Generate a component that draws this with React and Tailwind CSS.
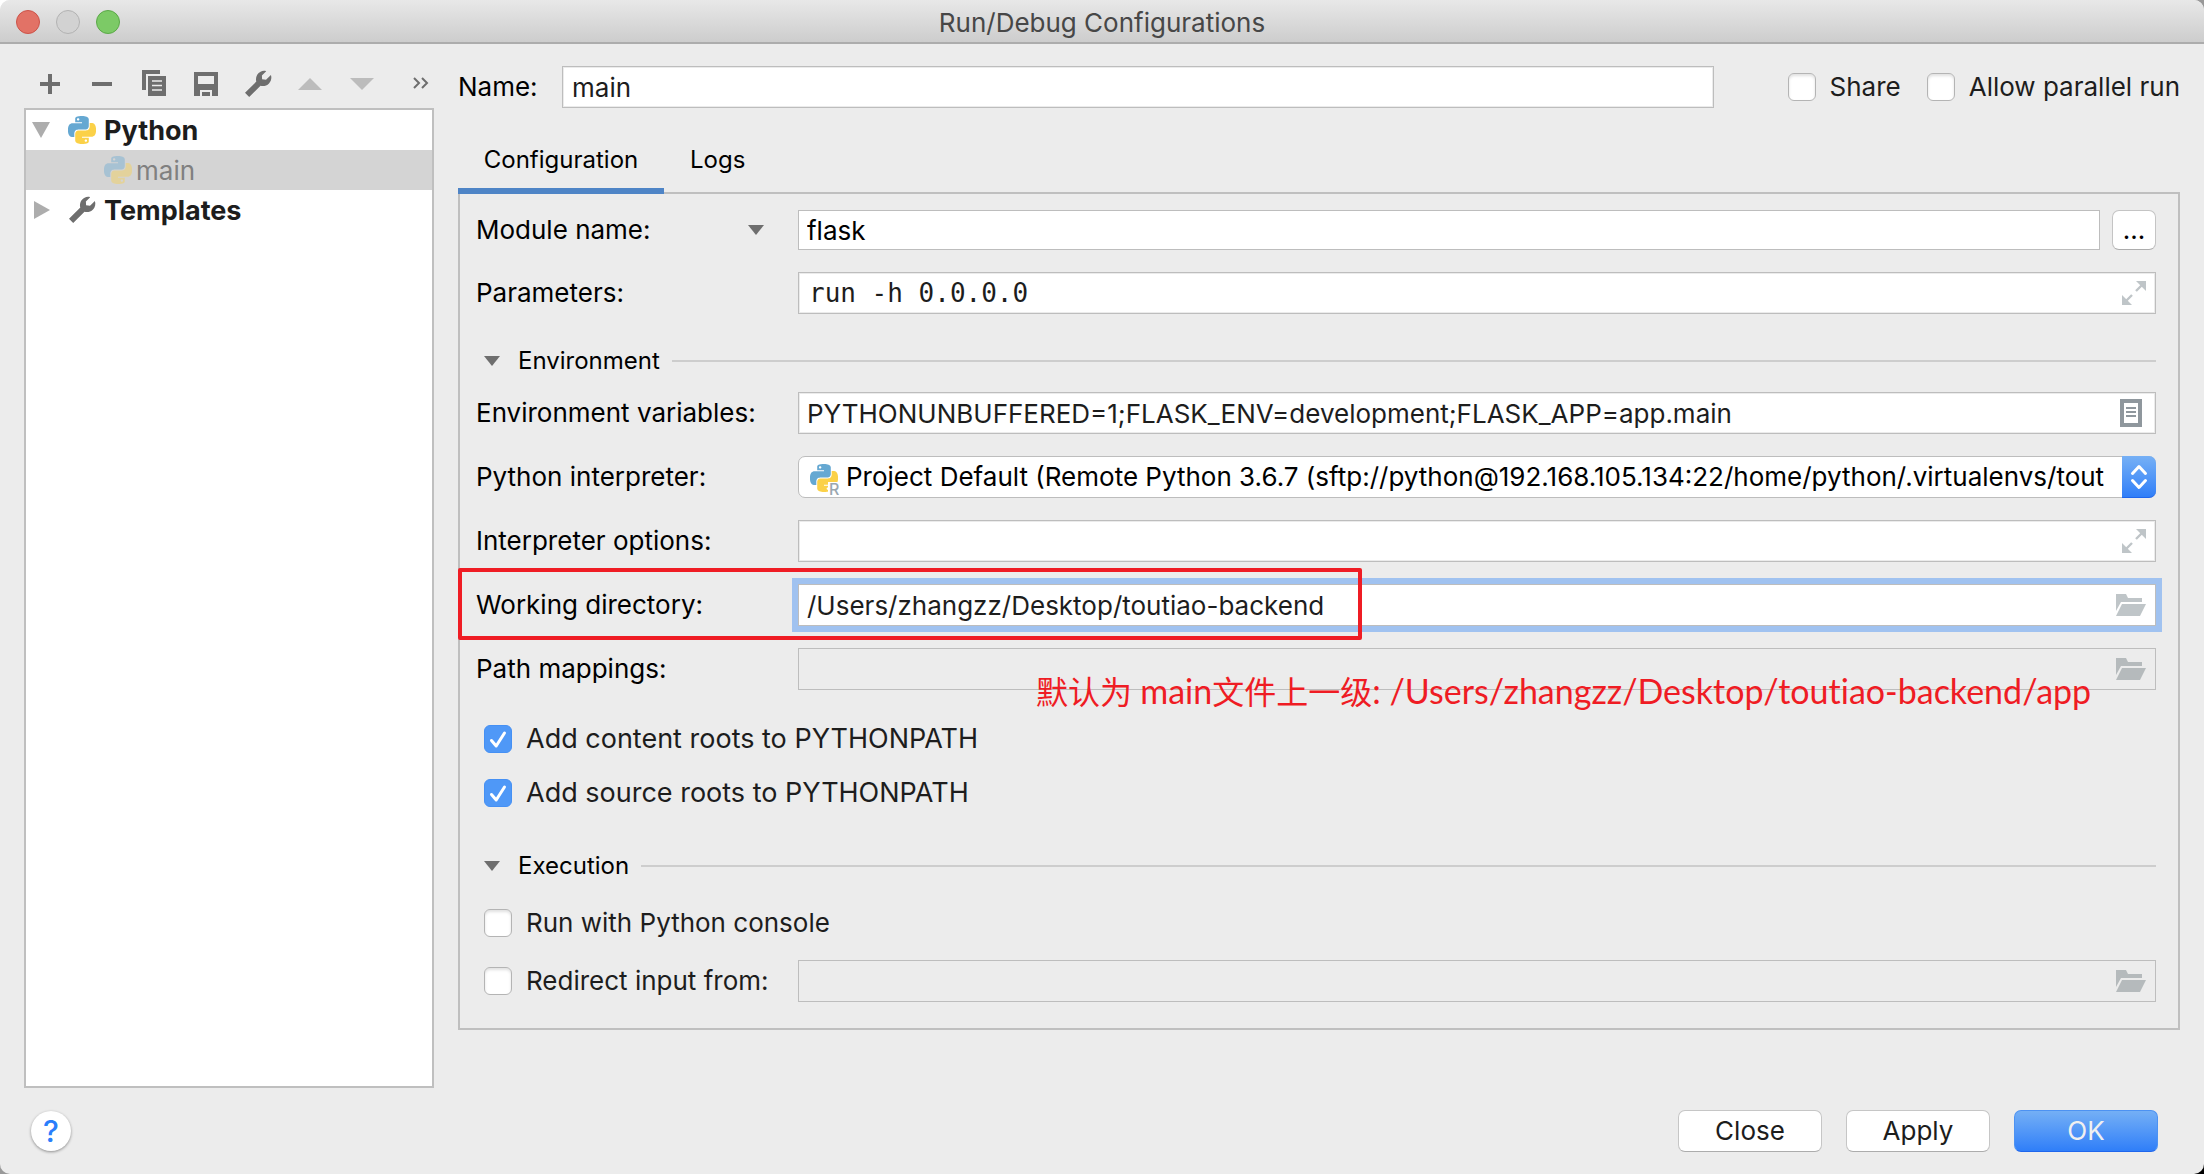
import React from "react";

const FIELD =
  "h-[42px] w-full min-w-0 rounded-none border border-[#bdbdbd] px-2 text-[26px] text-[#1d1d1d] outline-none";
const WHITE_FIELD = "bg-white shadow-[inset_0_0_0_1px_#ebebeb]";

const PY_HALF =
  "M14.25.18l.9.2.73.26.59.3.45.32.34.34.25.34.16.33.1.3.04.26.02.2-.01.13V8.5l-.05.63-.13.55-.21.46-.26.38-.3.31-.33.25-.35.19-.35.14-.33.1-.3.07-.26.04-.21.02H8.77l-.69.05-.59.14-.5.22-.41.27-.33.32-.27.35-.2.36-.15.37-.1.35-.07.32-.04.27-.02.21v3.06H3.17l-.21-.03-.28-.07-.32-.12-.35-.18-.36-.26-.36-.36-.35-.46-.32-.59-.28-.73-.21-.88-.14-1.05-.05-1.23.06-1.22.16-1.04.24-.87.32-.71.36-.57.4-.44.42-.33.42-.24.4-.16.36-.1.32-.05.24-.01h.16l.06.01h8.16v-.83H6.18l-.01-2.75-.02-.37.05-.34.11-.31.17-.28.25-.26.31-.23.38-.2.44-.18.51-.15.58-.12.64-.1.71-.06.77-.04.84-.02 1.27.05zm-6.3 1.98l-.23.33-.08.41.08.41.23.34.33.22.41.09.41-.09.33-.22.23-.34.08-.41-.08-.41-.23-.33-.33-.22-.41-.09-.41.09z";

function PythonIcon({ className = "" }) {
  return (
    <svg viewBox="0 0 24 24" className={`size-7 shrink-0 ${className}`} aria-hidden="true">
      <path d={PY_HALF} fill="#65a8d2" />
      <path d={PY_HALF} fill="#fbd148" transform="rotate(180 12 12)" />
    </svg>
  );
}

function WrenchIcon() {
  return (
    <svg viewBox="0 0 28 28" className="size-7 shrink-0" fill="#6e6e6e" aria-hidden="true">
      <path d="M1 22.800 12.300 11.600C11.200 7.600 13 3.400 16.600 1.700 18.400.800 20.300.600 22.200 1.200L17.900 5.500 18.100 9.300 22 9.700 26.900 4.900C27.900 7.800 27.200 11.200 25 13.400 22.700 15.700 19.400 16.500 16.500 15.700L5.200 27Z" />
    </svg>
  );
}

function FolderIcon({ dim }) {
  return (
    <svg viewBox="0 0 30 22" className="h-[22px] w-[30px]" fill={dim ? "#b5babc" : "#bfc5c8"} aria-hidden="true">
      <path d="M0 0h10l2 4h14v4H5L0 17Z" />
      <path d="M6 10h24l-6 12H0Z" />
    </svg>
  );
}

function ExpandIcon() {
  return (
    <svg viewBox="0 0 24 24" className="size-6" fill="#bfc5c8" aria-hidden="true">
      <path d="M14 0h10v10Z" />
      <path d="M0 14v10h10Z" />
      <path d="M21 3 14 10M3 21l7-7" stroke="#bfc5c8" strokeWidth="2.400" />
    </svg>
  );
}

function ListIcon() {
  return (
    <svg viewBox="0 0 22 28" className="h-7 w-[22px]" aria-hidden="true">
      <path d="M2 2h18v24H2Z" fill="none" stroke="#8f979d" strokeWidth="4" />
      <path d="M6 9h10M6 13h10M6 17h10" stroke="#8f979d" strokeWidth="2" />
    </svg>
  );
}

function Triangle() {
  return (
    <svg viewBox="0 0 16 10" className="h-[10px] w-4" fill="#6e6e6e" aria-hidden="true">
      <path d="M0 0h16L8 10Z" />
    </svg>
  );
}

function Check({ label, checked, className = "" }) {
  return (
    <label className={`flex h-[42px] shrink-0 items-center gap-[14px] whitespace-nowrap text-[#1d1d1d] ${className}`}>
      <span className="grid size-7 place-items-center">
        <input
          type="checkbox"
          defaultChecked={checked}
          className="peer col-start-1 row-start-1 size-7 appearance-none rounded-[6px] border border-[#b4b4b4] bg-white shadow-[inset_0_2px_3px_#0000001f] checked:border-[#4590f4] checked:bg-[#4f98f7] checked:shadow-none"
        />
        <svg
          viewBox="0 0 28 28"
          className="pointer-events-none invisible col-start-1 row-start-1 size-7 peer-checked:visible"
          fill="none"
          stroke="#fff"
          strokeWidth="3"
          strokeLinecap="round"
          strokeLinejoin="round"
          aria-hidden="true"
        >
          <path d="m7.500 15.500 4.700 5.500L20.500 8" />
        </svg>
      </span>
      {label}
    </label>
  );
}

function Row({ id, label, children, extra }) {
  return (
    <div className="relative flex items-center">
      <label htmlFor={id} className="w-[322px] shrink-0 whitespace-nowrap">
        {label}
      </label>
      <div className="relative flex min-w-0 flex-1 items-center">{children}</div>
      {extra}
    </div>
  );
}

function FieldButton({ label, children, className = "right-[10px]" }) {
  return (
    <button type="button" aria-label={label} className={`absolute ${className}`}>
      {children}
    </button>
  );
}

function SectionHead({ title, className }) {
  return (
    <div className={`flex h-[42px] items-center pl-2 ${className}`}>
      <button type="button" className="flex items-center gap-[18px] text-[24px]">
        <Triangle />
        {title}
      </button>
      <span className="ml-3 h-[2px] flex-1 bg-[#cdcdcd]" />
    </div>
  );
}

function ToolButton({ label, children }) {
  return (
    <button type="button" aria-label={label} className="grid h-8 w-[52px] place-items-center">
      <svg viewBox="0 0 32 32" className="size-8" fill="#6e6e6e" aria-hidden="true">
        {children}
      </svg>
    </button>
  );
}

function Sidebar() {
  return (
    <aside className="flex w-[410px] shrink-0 flex-col">
      <div className="flex h-16 items-center pt-4">
        <ToolButton label="Add">
          <path d="M14 6h4v8h8v4h-8v8h-4v-8H6v-4h8Z" />
        </ToolButton>
        <ToolButton label="Remove">
          <path d="M6 14h20v4H6Z" />
        </ToolButton>
        <ToolButton label="Copy">
          <path d="M4 2h18v4H8v16H4Z" />
          <path d="M10 8h18v20H10Z" />
          <path d="M14 13h10M14 17.500h10M14 22h10" stroke="#ececec" strokeWidth="1.600" />
        </ToolButton>
        <ToolButton label="Save">
          <path fillRule="evenodd" d="M4 4h24v24h-6v-6H10v6H4ZM8 8v8h16V8Z" />
          <path d="M12 24h8v4h-8Z" />
        </ToolButton>
        <button type="button" aria-label="Edit templates" className="grid h-8 w-[52px] place-items-center">
          <WrenchIcon />
        </button>
        <ToolButton label="Move up">
          <path d="M4 22h24L16 10Z" fill="#bcbcbc" />
        </ToolButton>
        <ToolButton label="Move down">
          <path d="M4 10h24L16 22Z" fill="#bcbcbc" />
        </ToolButton>
        <button type="button" aria-label="More" className="ml-auto grid h-8 w-[26px] place-items-center pb-[2px]">
          <svg viewBox="0 0 16 12" className="h-3 w-4" fill="none" stroke="#6e6e6e" strokeWidth="2" aria-hidden="true">
            <path d="m1 1 5 5-5 5M9 1l5 5-5 5" />
          </svg>
        </button>
      </div>
      <ul className="flex-1 border-2 border-[#bfbfbf] bg-white">
        <li className="flex h-10 items-center pl-[6px] text-[27px] font-bold text-[#1d1d1d]">
          <svg viewBox="0 0 18 16" className="h-4 w-[18px]" fill="#adadad" aria-hidden="true">
            <path d="M0 0h18L9 16Z" />
          </svg>
          <PythonIcon className="mr-2 ml-[18px]" />
          <span className="pt-[2px]">Python</span>
        </li>
        <li className="flex h-10 items-center bg-[#d4d4d4] pl-[78px] text-[#808080]">
          <PythonIcon className="mr-1 opacity-40" />
          <span className="pt-[2px]">main</span>
        </li>
        <li className="flex h-10 items-center pl-2 text-[27px] font-bold text-[#1d1d1d]">
          <svg viewBox="0 0 16 18" className="mr-[18px] h-[18px] w-4" fill="#adadad" aria-hidden="true">
            <path d="M0 0v18L16 9Z" />
          </svg>
          <WrenchIcon />
          <span className="ml-2 pt-[2px]">Templates</span>
        </li>
      </ul>
    </aside>
  );
}

function ConfigPanel() {
  return (
    <section className="border-2 border-[#bfbfbf] pt-4 pr-[22px] pb-[26px] pl-4">
      <div className="flex flex-col gap-[22px]">
        <div className="flex items-center">
          <div className="flex w-[322px] shrink-0 items-center justify-between pr-[34px]">
            <label htmlFor="module">Module name:</label>
            <button type="button" aria-label="Choose target type">
              <Triangle />
            </button>
          </div>
          <input
            id="module"
            defaultValue="flask"
            className="h-10 min-w-0 flex-1 border border-[#bdbdbd] bg-white px-2 text-black outline-none"
          />
          <button
            type="button"
            aria-label="Browse modules"
            className="ml-3 h-10 w-11 rounded-[7px] border border-[#c4c4c4] border-b-[#acacac] bg-white leading-[38px]"
          >
            ...
          </button>
        </div>
        <Row id="params" label="Parameters:">
          <input
            id="params"
            defaultValue="run -h 0.0.0.0"
            className={`${FIELD} ${WHITE_FIELD} pl-[10px]! font-['DejaVu_Sans_Mono',monospace]`}
          />
          <FieldButton label="Expand parameters">
            <ExpandIcon />
          </FieldButton>
        </Row>
      </div>

      <SectionHead title="Environment" className="mt-[26px] mb-[10px]" />

      <div className="flex flex-col gap-[22px]">
        <Row id="env" label="Environment variables:">
          <input
            id="env"
            defaultValue="PYTHONUNBUFFERED=1;FLASK_ENV=development;FLASK_APP=app.main"
            className={`${FIELD} ${WHITE_FIELD}`}
          />
          <FieldButton label="Edit variables" className="right-[14px]">
            <ListIcon />
          </FieldButton>
        </Row>
        <Row id="interp" label="Python interpreter:">
          <select
            id="interp"
            className="h-[42px] w-full min-w-0 appearance-none overflow-hidden rounded-[7px] border border-[#bdbdbd] bg-white pr-[34px] pl-[47px] text-black outline-none"
          >
            <option>
              Project Default (Remote Python 3.6.7 (sftp://python@192.168.105.134:22/home/python/.virtualenvs/tout
            </option>
          </select>
          <span className="pointer-events-none absolute top-2 left-3">
            <PythonIcon />
            <span className="absolute top-[18px] left-[18px] bg-white pl-px text-[16px] leading-[14px] font-medium text-[#9aa7b0]">R</span>
          </span>
          <span className="pointer-events-none absolute right-0 grid h-[42px] w-[34px] place-items-center rounded-r-[7px] border-b border-[#1f66ec] bg-linear-to-b from-[#76b0f5] to-[#2f7ef8]">
            <svg viewBox="0 0 18 26" className="h-[26px] w-[18px]" fill="none" stroke="#fff" strokeWidth="3" strokeLinecap="round" strokeLinejoin="round" aria-hidden="true">
              <path d="m2.500 9.500 6.500-7 6.500 7M2.500 16.500l6.500 7 6.500-7" />
            </svg>
          </span>
        </Row>
        <Row id="opts" label="Interpreter options:">
          <input id="opts" className={`${FIELD} ${WHITE_FIELD}`} />
          <FieldButton label="Expand options">
            <ExpandIcon />
          </FieldButton>
        </Row>
        <Row
          id="cwd"
          label="Working directory:"
          extra={<div className="pointer-events-none absolute -top-4 -bottom-[14px] -left-[18px] w-[904px] rounded-[2px] border-4 border-[#ef1c24]" />}
        >
          <input
            id="cwd"
            defaultValue="/Users/zhangzz/Desktop/toutiao-backend"
            className={`${FIELD} bg-white outline-[6px]! outline-solid! outline-[#a0c2f0]!`}
          />
          <FieldButton label="Browse directory">
            <FolderIcon />
          </FieldButton>
        </Row>
        <Row
          id="maps"
          label="Path mappings:"
          extra={
            <p className="pointer-events-none absolute top-5 left-[560px] z-10 font-[Lato,'Noto_Sans_CJK_SC',sans-serif] text-[32px] leading-[46px] whitespace-nowrap text-[#ef1c24] [font-variant-ligatures:none]">
              默认为 <span className="text-[34px]">main</span>文件上一级
              <span className="text-[34px]">: /Users/zhangzz/Desktop/toutiao-backend/app</span>
            </p>
          }
        >
          <input id="maps" readOnly className={`${FIELD} bg-transparent`} />
          <FieldButton label="Edit path mappings">
            <FolderIcon dim />
          </FieldButton>
        </Row>
      </div>

      <div className="mt-7 flex flex-col items-start gap-3 pl-2 text-[27px]">
        <Check label="Add content roots to PYTHONPATH" checked />
        <Check label="Add source roots to PYTHONPATH" checked />
      </div>

      <SectionHead title="Execution" className="mt-[31px] mb-[15px]" />

      <div className="flex flex-col gap-4">
        <Check label="Run with Python console" className="self-start pl-2" />
        <div className="flex items-center">
          <Check label="Redirect input from:" className="w-[322px] pl-2" />
          <div className="relative flex min-w-0 flex-1 items-center">
            <input aria-label="Redirect input file" readOnly className={`${FIELD} bg-transparent`} />
            <FieldButton label="Browse input file">
              <FolderIcon dim />
            </FieldButton>
          </div>
        </div>
      </div>
    </section>
  );
}

export default function App() {
  return (
    <div className="bg-linear-to-br from-white via-[#999] to-black">
      <div className="flex min-h-screen flex-col overflow-hidden rounded-[10px] bg-[#ececec] font-[Inter,'Liberation_Sans',sans-serif] text-[26px] leading-8 text-black">
        <header className="grid h-11 grid-cols-[1fr_auto_1fr] items-center border-b-2 border-[#acacac] bg-linear-to-b from-[#e8e8e8] to-[#cdcdcd] px-4">
          <div className="flex gap-4 pt-[2px]">
            <button type="button" aria-label="Close window" className="size-6 rounded-full border border-[#cc5349] bg-[#e27266]" />
            <button type="button" aria-label="Minimize window" className="size-6 rounded-full border border-[#b2b2b2] bg-[#d2d2d2]" />
            <button type="button" aria-label="Zoom window" className="size-6 rounded-full border border-[#5ba848] bg-[#7cca66]" />
          </div>
          <h1 className="pt-1 text-[#474747]">Run/Debug Configurations</h1>
        </header>

        <main className="flex flex-1 gap-6 px-6">
          <Sidebar />
          <div className="min-w-0 flex-1 pt-[22px]">
            <div className="flex items-center">
              <label htmlFor="name" className="w-[104px] shrink-0">
                Name:
              </label>
              <input id="name" defaultValue="main" className={`${FIELD} ${WHITE_FIELD} px-[9px]! flex-1`} />
              <Check label="Share" className="ml-[74px]" />
              <Check label="Allow parallel run" className="ml-[26px]" />
            </div>
            <nav role="tablist" className="relative mt-6 -mb-[2px] flex text-[24px]">
              <button type="button" role="tab" aria-selected="true" className="h-[62px] w-[206px] border-b-[6px] border-[#4e84c6]">
                Configuration
              </button>
              <button type="button" role="tab" aria-selected="false" className="h-[62px] border-b-[6px] border-transparent px-[26px]">
                Logs
              </button>
            </nav>
            <ConfigPanel />
          </div>
        </main>

        <footer className="flex items-center gap-6 py-[22px] pr-[46px] pl-[31px]">
          <button
            type="button"
            aria-label="Help"
            className="mr-auto size-10 rounded-full bg-white text-[30px] leading-10 font-medium text-[#2a7efb] shadow-[0_1px_3px_#00000066]"
          >
            ?
          </button>
          <button type="button" className="h-[42px] w-36 rounded-[7px] border border-[#c6c6c6] border-b-[#acacac] bg-white text-[#1d1d1d]">
            Close
          </button>
          <button type="button" className="h-[42px] w-36 rounded-[7px] border border-[#c6c6c6] border-b-[#acacac] bg-white text-[#1d1d1d]">
            Apply
          </button>
          <button
            type="button"
            className="h-[42px] w-36 rounded-[7px] border border-[#4d92f2] border-b-[#1f66ec] bg-linear-to-b from-[#74aff5] to-[#2f7ef8] text-[#f0f0f0]"
          >
            OK
          </button>
        </footer>
      </div>
    </div>
  );
}
